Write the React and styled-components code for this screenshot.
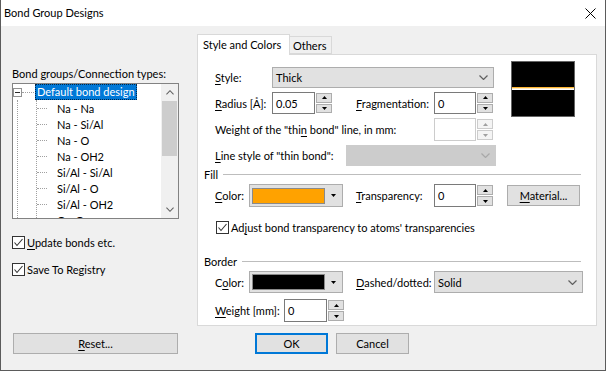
import React from "react";
import styled, { createGlobalStyle } from "styled-components";

const GlobalStyle = createGlobalStyle`
  html, body { margin: 0; padding: 0; background: #fff; }
  body {
    font-family: Lato, "Segoe UI", sans-serif;
    font-size: 11px;
    color: #000;
  }
  * { box-sizing: border-box; }
`;

const Window = styled.div`
  width: 606px;
  height: 371px;
  display: flex;
  flex-direction: column;
  border: 1px solid #5b5b5b;
  border-top: none;
  background: #f0f0f0;
  overflow: hidden;
`;

const TitleBar = styled.div`
  height: 26px;
  flex: none;
  display: flex;
  align-items: center;
  justify-content: space-between;
  background: #fff;
  padding: 0 9px 0 3px;
`;

const Title = styled.span`
  font-size: 11px;
  line-height: 16px;
`;

const Main = styled.div`
  display: flex;
  height: 300px;
  padding: 8px 0 0 11px;
`;

const LeftPane = styled.div`
  width: 167px;
  margin-right: 18px;
  display: flex;
  flex-direction: column;
`;

const Text = styled.div`
  height: 16px;
  line-height: 16px;
  white-space: nowrap;
  margin-top: ${(p) => p.$top || 0}px;
`;

const U = styled.span`
  text-decoration: underline;
  text-underline-offset: 2px;
`;

const TreeBox = styled.div`
  margin-top: 1px;
  height: 136px;
  border: 1px solid #828282;
  background: #fff;
  display: flex;
`;

const TreeContent = styled.div`
  flex: 1;
  overflow: hidden;
`;

const TreeRow = styled.div`
  height: 16px;
  display: flex;
  align-items: center;
  white-space: nowrap;
`;

const Expander = styled.div`
  width: 9px;
  height: 9px;
  border: 1px solid #919191;
  display: flex;
  align-items: center;
  justify-content: center;
  &::after {
    content: "";
    width: 5px;
    height: 1px;
    background: #2a2a2a;
  }
`;

const Connector = styled.span`
  width: ${(p) => p.$w}px;
  height: 0;
  border-top: 1px dotted #a0a0a0;
`;

const Selected = styled.span`
  margin-left: 1px;
  height: 16px;
  line-height: 16px;
  padding: 0 2px;
  background: #0078d7;
  color: #fff;
  outline: 1px dotted #00264a;
  outline-offset: -1px;
`;

const OuterLine = styled.div`
  margin-left: 4px;
  border-left: 1px dotted #a0a0a0;
  padding-left: 18px;
`;

const ChildList = styled.div`
  border-left: 1px dotted #a0a0a0;
`;

const ChildLabel = styled.span`
  margin-left: 10px;
`;

const ScrollBar = styled.div`
  width: 17px;
  background: #f0f0f0;
  display: flex;
  flex-direction: column;
`;

const ScrollArrow = styled.div`
  height: 17px;
  display: flex;
  align-items: center;
  justify-content: center;
`;

const Thumb = styled.div`
  height: 55px;
  margin: 0 1px;
  background: #cdcdcd;
`;

const Track = styled.div`
  flex: 1;
`;

const CheckRow = styled.div`
  display: flex;
  align-items: center;
  height: 15px;
  margin-top: ${(p) => p.$top || 0}px;
  padding-left: ${(p) => p.$indent || 0}px;
  white-space: nowrap;
`;

const Box = styled.span`
  width: 13px;
  height: 13px;
  border: 1px solid #333;
  background: #fff;
  margin-right: 2px;
  display: flex;
`;

const Tabs = styled.div`
  width: 400px;
  display: flex;
  flex-direction: column;
`;

const TabStrip = styled.div`
  height: 20px;
  display: flex;
  align-items: flex-end;
`;

const Tab = styled.div`
  position: relative;
  height: ${(p) => (p.$active ? 21 : 18)}px;
  width: ${(p) => p.$w}px;
  margin-left: ${(p) => (p.$active ? 0 : -1)}px;
  margin-bottom: ${(p) => (p.$active ? -1 : 0)}px;
  z-index: ${(p) => (p.$active ? 1 : 0)};
  border: 1px solid #d9d9d9;
  border-bottom: ${(p) => (p.$active ? "none" : "1px solid #d9d9d9")};
  background: ${(p) => (p.$active ? "#fff" : "#f0f0f0")};
  padding-left: ${(p) => (p.$active ? 5 : 3)}px;
  line-height: ${(p) => (p.$active ? 19 : 18)}px;
  white-space: nowrap;
`;

const Panel = styled.div`
  height: 280px;
  border: 1px solid #d9d9d9;
  background: #fff;
  padding-left: 6px;
  display: flex;
  flex-direction: column;
`;

const TopSection = styled.div`
  display: flex;
  align-items: flex-start;
  padding: 6px 0 0 11px;
`;

const Form = styled.div`
  margin-top: 6px;
  width: 281px;
  display: flex;
  flex-direction: column;
  gap: 4px;
`;

const Row = styled.div`
  display: flex;
  align-items: center;
  height: ${(p) => p.$h}px;
  margin-top: ${(p) => p.$top || 0}px;
  padding-left: ${(p) => p.$indent || 0}px;
`;

const Label = styled.span`
  flex: none;
  width: ${(p) => p.$w}px;
  margin-left: ${(p) => p.$left || 0}px;
  white-space: nowrap;
`;

const Combo = styled.div`
  flex: none;
  width: ${(p) => p.$w}px;
  height: ${(p) => p.$h || 21}px;
  display: flex;
  align-items: center;
  justify-content: space-between;
  padding: 0 5px 0 3px;
  background: ${(p) => (p.$disabled ? "#cccccc" : "#e1e1e1")};
  border: 1px solid ${(p) => (p.$disabled ? "#cccccc" : "#adadad")};
`;

const SpinWrap = styled.div`
  flex: none;
  width: ${(p) => p.$w}px;
  height: ${(p) => p.$h}px;
  display: flex;
`;

const Edit = styled.div`
  flex: 1;
  border: 1px solid ${(p) => (p.$disabled ? "#cccccc" : "#7a7a7a")};
  background: #fff;
  padding-left: 3px;
  display: flex;
  align-items: center;
`;

const SpinButtons = styled.div`
  width: 17px;
  display: flex;
  flex-direction: column;
  gap: 1px;
  padding: 1px 0 1px 1px;
`;

const SpinButton = styled.div`
  flex: 1;
  background: ${(p) => (p.$disabled ? "#f4f4f4" : "#e1e1e1")};
  border: 1px solid ${(p) => (p.$disabled ? "#cccccc" : "#adadad")};
  display: flex;
  align-items: center;
  justify-content: center;
`;

const Preview = styled.div`
  margin-left: 15px;
  width: 64px;
  height: 56px;
  background: #000;
  border: 1px solid #646464;
  display: flex;
  flex-direction: column;
`;

const Stripe = styled.div`
  margin-top: 25px;
  height: 3px;
  background: linear-gradient(#ffb733 0 1px, #ffe9bd 1px 2px, #ffffff 2px 3px);
`;

const GroupHeader = styled.div`
  display: flex;
  align-items: center;
  height: 14px;
  margin-top: ${(p) => p.$top}px;
  margin-right: 15px;
  &::after {
    content: "";
    flex: 1;
    height: 1px;
    background: #bdbdbd;
    margin-left: 5px;
  }
`;

const ColorCombo = styled.div`
  flex: none;
  width: 94px;
  height: ${(p) => p.$h}px;
  background: #e1e1e1;
  border: 1px solid #adadad;
  display: flex;
  align-items: center;
  padding-left: 2px;
`;

const Swatch = styled.div`
  width: 73px;
  height: 16px;
  background: ${(p) => p.$color};
  border: 1px solid #8a8a8a;
  margin-right: 6px;
`;

const Button = styled.div`
  flex: none;
  width: ${(p) => p.$w}px;
  height: ${(p) => p.$h || 21}px;
  margin-left: ${(p) => p.$left || 0}px;
  background: #e1e1e1;
  border: ${(p) => (p.$default ? "2px solid #0078d7" : "1px solid #adadad")};
  display: flex;
  align-items: center;
  justify-content: center;
  white-space: nowrap;
`;

const Footer = styled.div`
  display: flex;
  padding: 7px 0 0 12px;
`;

const Chevron = ({ up, color = "#606060", w = 9 }) => (
  <svg width={w} height="5" viewBox="0 0 9 5">
    <polyline
      points={up ? "0.5,4.5 4.5,0.5 8.5,4.5" : "0.5,0.5 4.5,4.5 8.5,0.5"}
      fill="none"
      stroke={color}
      strokeWidth="1.2"
    />
  </svg>
);

const Tri = ({ up, color = "#000" }) => (
  <svg width="5" height="3" viewBox="0 0 5 3">
    <polygon points={up ? "0,3 5,3 2.5,0" : "0,0 5,0 2.5,3"} fill={color} />
  </svg>
);

const Check = () => (
  <svg width="11" height="11" viewBox="0 0 11 11">
    <polyline points="1.5,5.5 4,8.5 9.5,2" fill="none" stroke="#333" strokeWidth="1.1" />
  </svg>
);

const Checkbox = ({ children, ...rest }) => (
  <CheckRow {...rest}>
    <Box>
      <Check />
    </Box>
    <span>{children}</span>
  </CheckRow>
);

const Spin = ({ w, h, value, disabled }) => (
  <SpinWrap $w={w} $h={h}>
    <Edit $disabled={disabled}>{value}</Edit>
    <SpinButtons>
      <SpinButton $disabled={disabled}>
        <Tri up color={disabled ? "#a0a0a0" : "#000"} />
      </SpinButton>
      <SpinButton $disabled={disabled}>
        <Tri color={disabled ? "#a0a0a0" : "#000"} />
      </SpinButton>
    </SpinButtons>
  </SpinWrap>
);

const children = [
  "Na - Na",
  "Na - Si/Al",
  "Na - O",
  "Na - OH2",
  "Si/Al - Si/Al",
  "Si/Al - O",
  "Si/Al - OH2",
  "O - O",
];

export default function App() {
  return (
    <>
      <GlobalStyle />
      <Window>
        <TitleBar>
          <Title>Bond Group Designs</Title>
          <svg width="11" height="11" viewBox="0 0 11 11">
            <path d="M0.5 0.5 L10.5 10.5 M10.5 0.5 L0.5 10.5" stroke="#000" strokeWidth="1" />
          </svg>
        </TitleBar>
        <Main>
          <LeftPane>
            <Text $top={32}>Bond groups/Connection types:</Text>
            <TreeBox>
              <TreeContent>
                <TreeRow>
                  <Expander />
                  <Connector $w={12} />
                  <Selected>Default bond design</Selected>
                </TreeRow>
                <OuterLine>
                  <ChildList>
                    {children.map((c) => (
                      <TreeRow key={c}>
                        <Connector $w={10} />
                        <ChildLabel>{c}</ChildLabel>
                      </TreeRow>
                    ))}
                  </ChildList>
                </OuterLine>
              </TreeContent>
              <ScrollBar>
                <ScrollArrow>
                  <Chevron up w={8} />
                </ScrollArrow>
                <Thumb />
                <Track />
                <ScrollArrow>
                  <Chevron w={8} />
                </ScrollArrow>
              </ScrollBar>
            </TreeBox>
            <Checkbox $top={16}>
              <U>U</U>pdate bonds etc.
            </Checkbox>
            <Checkbox $top={12}>Save To Registry</Checkbox>
          </LeftPane>

          <Tabs>
            <TabStrip>
              <Tab $active $w={93}>Style and Colors</Tab>
              <Tab $w={43}>Others</Tab>
            </TabStrip>
            <Panel>
              <TopSection>
                <Form>
                  <Row $h={21}>
                    <Label $w={57}>
                      <U>S</U>tyle:
                    </Label>
                    <Combo $w={222}>
                      <span>Thick</span>
                      <Chevron />
                    </Combo>
                  </Row>
                  <Row $h={22}>
                    <Label $w={57}>
                      <U>R</U>adius [Å]:
                    </Label>
                    <Spin w={60} h={22} value="0.05" />
                    <Label $w={78} $left={24}>
                      <U>F</U>ragmentation:
                    </Label>
                    <Spin w={59} h={22} value="0" />
                  </Row>
                  <Row $h={23}>
                    <Label $w={219}>
                      Weight of the "thi<U>n</U> bond" line, in mm:
                    </Label>
                    <Spin w={59} h={23} value="" disabled />
                  </Row>
                  <Row $h={21}>
                    <Label $w={131}>
                      <U>L</U>ine style of "thin bond":
                    </Label>
                    <Combo $w={150} $disabled>
                      <span />
                      <Chevron color="#a8a8a8" />
                    </Combo>
                  </Row>
                </Form>
                <Preview>
                  <Stripe />
                </Preview>
              </TopSection>

              <GroupHeader $top={1}>Fill</GroupHeader>
              <Row $h={23} $top={3} $indent={11}>
                <Label $w={34}>
                  <U>C</U>olor:
                </Label>
                <ColorCombo $h={23}>
                  <Swatch $color="#ffa200" />
                  <Tri />
                </ColorCombo>
                <Label $w={78} $left={13}>
                  <U>T</U>ransparency:
                </Label>
                <Spin w={59} h={23} value="0" />
                <Button $w={73} $left={14}>
                  <span>
                    <U>M</U>aterial...
                  </span>
                </Button>
              </Row>
              <Checkbox $top={13} $indent={12}>
                Ad<U>j</U>ust bond transparency to atoms' transparencies
              </Checkbox>

              <GroupHeader $top={19}>Border</GroupHeader>
              <Row $h={22} $top={3} $indent={11}>
                <Label $w={34}>
                  C<U>o</U>lor:
                </Label>
                <ColorCombo $h={22}>
                  <Swatch $color="#000" />
                  <Tri />
                </ColorCombo>
                <Label $w={78} $left={13}>
                  <U>D</U>ashed/dotted:
                </Label>
                <Combo $w={149} $h={22}>
                  <span>Solid</span>
                  <Chevron />
                </Combo>
              </Row>
              <Row $h={23} $top={6} $indent={11}>
                <Label $w={69}>
                  <U>W</U>eight [mm]:
                </Label>
                <Spin w={60} h={23} value="0" />
              </Row>
            </Panel>
          </Tabs>
        </Main>
        <Footer>
          <Button $w={165}>
            <span>
              <U>R</U>eset...
            </span>
          </Button>
          <Button $w={73} $left={77} $default>
            OK
          </Button>
          <Button $w={73} $left={8}>
            Cancel
          </Button>
        </Footer>
      </Window>
    </>
  );
}
